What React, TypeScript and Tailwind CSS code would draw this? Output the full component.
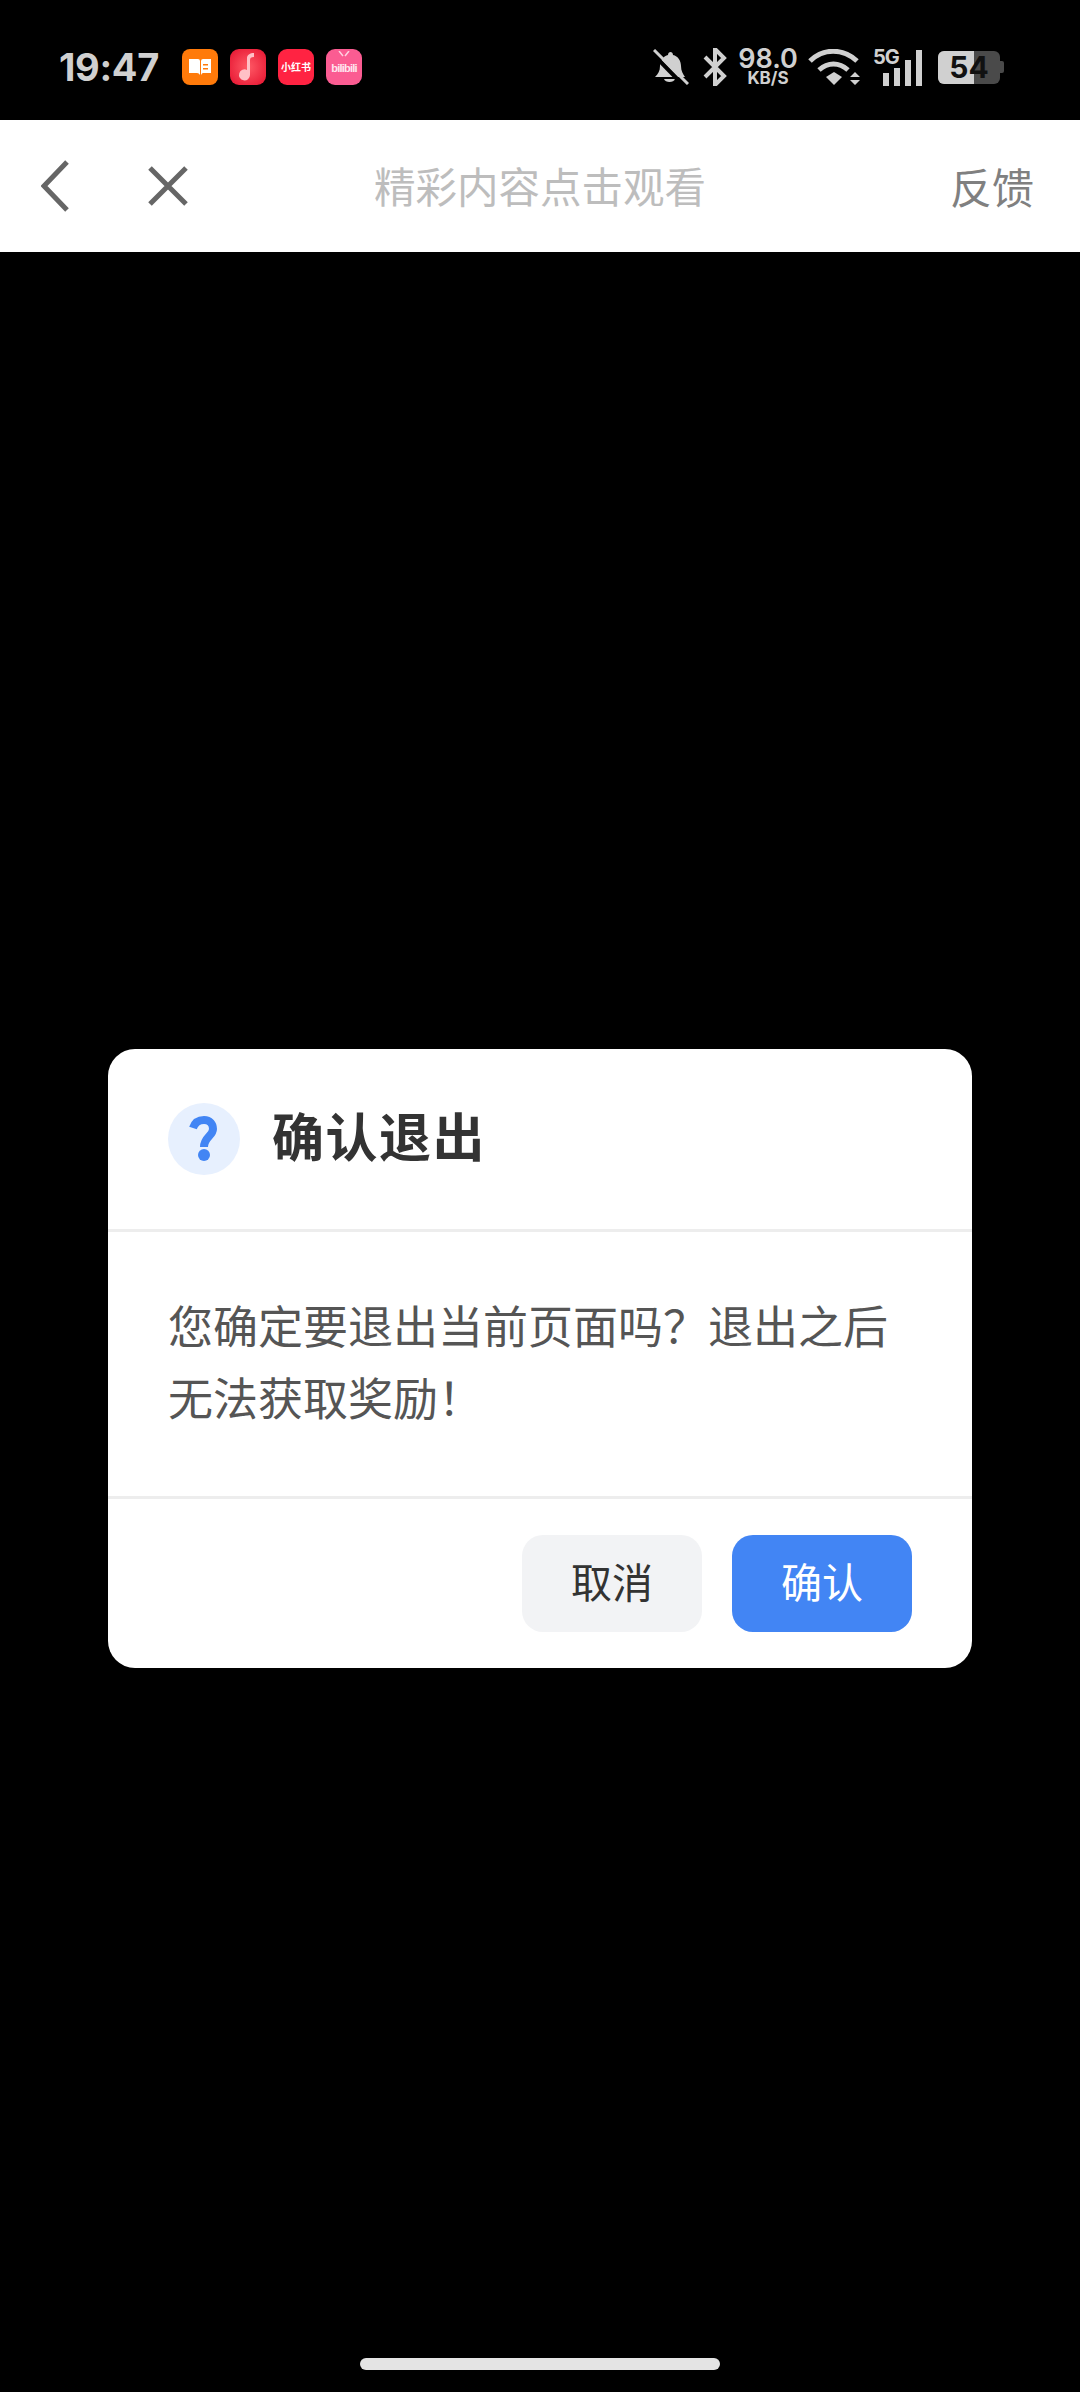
import React from "react";

const CJK = "font-['Inter','Noto_Sans_CJK_SC',sans-serif]";

function AppIcons() {
  return (
    <div className="flex items-center gap-[12px] ml-[23px]">
      {/* reader */}
      <div className="w-[36px] h-[36px] rounded-[8px] bg-[#ff7a0a] flex items-center justify-center">
        <svg width="24" height="18" viewBox="0 0 24 18">
          <path d="M1 1h9q2 0 2 2v14q-1-2-3-2H1z M13 3q0-2 2-2h8v14h-8q-1 0-2 2z" fill="#fff" />
          <path d="M15 6h5v1.500h-5zM15 10h5v1.500h-5z" fill="#ff7a0a" />
        </svg>
      </div>
      {/* music */}
      <div className="w-[36px] h-[36px] rounded-[9px] bg-[radial-gradient(circle,#ff5a66,#e5122f)] flex items-center justify-center">
        <svg width="24" height="30" viewBox="0 0 24 30">
          <path d="M11 23V6c0-3 3-5 7-5v4c-3 0-4 1-4 3v15a5.500 5.500 0 1 1-3-5z" fill="#ffc0c6" />
        </svg>
      </div>
      {/* xiaohongshu */}
      <div className="w-[36px] h-[36px] rounded-[9px] bg-[#ff2342] flex items-center justify-center overflow-hidden">
        <span className="text-white font-['Noto_Sans_CJK_SC',sans-serif] font-bold text-[10px] leading-none whitespace-nowrap">小红书</span>
      </div>
      {/* bilibili */}
      <div className="relative w-[36px] h-[36px] rounded-[9px] bg-[#fb5c92] flex items-center justify-center overflow-hidden">
        <svg width="12" height="6" viewBox="0 0 12 6" className="absolute top-[2px] left-[12px]">
          <path d="M1 0l4 5M11 0L7 5" stroke="#ffd0e0" strokeWidth="1.500" fill="none" />
        </svg>
        <span className="mt-[3px] text-[#ffe6ef] font-['Liberation_Sans',sans-serif] font-bold text-[11px] leading-none tracking-[-0.8px]">bilibili</span>
      </div>
    </div>
  );
}

function SystemIcons() {
  return (
    <div className="flex items-center text-[#d0d0d0]">
      {/* muted bell */}
      <svg width="36" height="36" viewBox="0 0 36 36" className="mr-[14px]">
        <path d="M2 28c3-3 5-6 5-11 0-6 4-10 8-11 0-4 5-4 5 0 5 1 8 6 8 11 0 5 2 8 4 11z" fill="currentColor" />
        <path d="M11 30h11c-1 4-10 4-11 0z" fill="currentColor" />
        <path d="M-1 4l32 33" stroke="#000" strokeWidth="4" />
        <path d="M1 1l34 34" stroke="currentColor" strokeWidth="3" />
      </svg>
      {/* bluetooth */}
      <svg width="24" height="38" viewBox="0 0 24 38" className="mr-[12px]">
        <path d="M2 9l19 19-9 9V1l9 9L2 29" fill="none" stroke="currentColor" strokeWidth="4" />
      </svg>
      {/* network speed */}
      <div className="flex flex-col items-center w-[58px] mr-[11px] font-['Inter',sans-serif] font-semibold">
        <span className="text-[27px] leading-[22px]">98.0</span>
        <span className="text-[17px] leading-[16px] font-bold">KB/S</span>
      </div>
      {/* wifi */}
      <svg width="52" height="37" viewBox="0 0 52 37" className="mr-[13px]">
        <path d="M2 12c13-13 33-13 47 0" fill="none" stroke="currentColor" strokeWidth="5" />
        <path d="M11 21c9-8 20-8 29 0" fill="none" stroke="currentColor" strokeWidth="5" />
        <path d="M18 28l8-5 8 5-8 8z" fill="currentColor" />
        <path d="M42 28l5-5 5 5zM42 31h10l-5 5z" fill="currentColor" />
      </svg>
      {/* 5G signal */}
      <div className="relative w-[48px] h-[37px] mr-[17px]">
        <span className="absolute left-0 top-[-3px] font-['Inter',sans-serif] font-bold text-[20px] leading-[22px] tracking-[-1px]">5G</span>
        <div className="absolute left-[10px] bottom-0 flex items-end gap-[5px]">
          <div className="w-[6px] h-[13px] bg-current" />
          <div className="w-[6px] h-[18px] bg-current" />
          <div className="w-[6px] h-[26px] bg-current" />
          <div className="w-[6px] h-[36px] bg-current" />
        </div>
      </div>
      {/* battery */}
      <div className="relative w-[62px] h-[33px] rounded-[6px] bg-[#4a4a4a] overflow-hidden flex items-center justify-center">
        <div className="absolute left-0 top-0 bottom-0 w-[36px] bg-[#d0d0d0]" />
        <span className="relative font-['Inter',sans-serif] font-bold text-[30px] leading-none text-[#111]">54</span>
      </div>
      <div className="w-[4px] h-[12px] rounded-r-[2px] bg-[#4a4a4a]" />
    </div>
  );
}

export default function App() {
  return (
    <div className={`relative w-[1080px] h-[2392px] bg-black flex flex-col ${CJK}`}>
      {/* status bar */}
      <div className="h-[120px] flex items-center justify-between pl-[59px] pr-[76px] pt-[14px] shrink-0">
        <div className="flex items-center">
          <span className="font-['Inter',sans-serif] font-bold text-[38px] tracking-[-0.3px] leading-none text-[#d0d0d0]">19:47</span>
          <AppIcons />
        </div>
        <SystemIcons />
      </div>

      {/* title bar */}
      <div className="h-[132px] bg-white flex items-center shrink-0 pl-[41px] pr-[46px]">
        <svg width="28" height="52" viewBox="0 0 28 52" className="shrink-0">
          <path d="M26 2L3 26l23 24" fill="none" stroke="#666" strokeWidth="5" />
        </svg>
        <svg width="40" height="40" viewBox="0 0 40 40" className="ml-[79px] shrink-0">
          <path d="M2 2l36 36M38 2L2 38" fill="none" stroke="#666" strokeWidth="5" />
        </svg>
        <div className="flex-1 text-center text-[41.5px] leading-none text-[#bdbdbd] pr-[58px] pt-[5px]">精彩内容点击观看</div>
        <div className="text-[42px] leading-none text-[#808080] pt-[5px]">反馈</div>
      </div>

      {/* dialog area */}
      <div className="flex-1 pt-[797px] px-[108px]">
        <div className="bg-white rounded-[27px] h-[619px] flex flex-col">
          <div className="h-[180px] pl-[60px] flex items-center shrink-0">
            <div className="w-[72px] h-[72px] rounded-full bg-[#e7f0fe] flex items-center justify-center">
              <svg width="30" height="46" viewBox="0 0 30 46">
                <path d="M4 12C6 6 10 4 15 4c6 0 9 4 9 9 0 7-9 8-9 18" fill="none" stroke="#4285f4" strokeWidth="8" />
                <circle cx="15" cy="39" r="6" fill="#4285f4" />
              </svg>
            </div>
            <h1 className="ml-[32px] text-[52px] leading-none font-bold text-[#333] tracking-[1.5px]">确认退出</h1>
          </div>
          <div className="h-[3px] bg-[#ededed] shrink-0" />
          <div className="h-[264px] shrink-0 px-[60px] pt-[60px] text-[45px] leading-[72px] text-[#555]">
            您确定要退出当前页面吗？退出之后
            <br />
            无法获取奖励！
          </div>
          <div className="h-[3px] bg-[#ededed] shrink-0" />
          <div className="flex-1 flex justify-end items-start pt-[36px] pr-[60px] gap-[30px]">
            <button className="w-[180px] h-[97px] rounded-[21px] bg-[#f2f3f5] text-[41px] text-[#333]">取消</button>
            <button className="w-[180px] h-[97px] rounded-[21px] bg-[#4285f4] text-[41px] text-white">确认</button>
          </div>
        </div>
      </div>

      {/* home indicator */}
      <div className="h-[34px] shrink-0 flex justify-center">
        <div className="w-[360px] h-[12px] rounded-full bg-[#e4e4e4]" />
      </div>
    </div>
  );
}
